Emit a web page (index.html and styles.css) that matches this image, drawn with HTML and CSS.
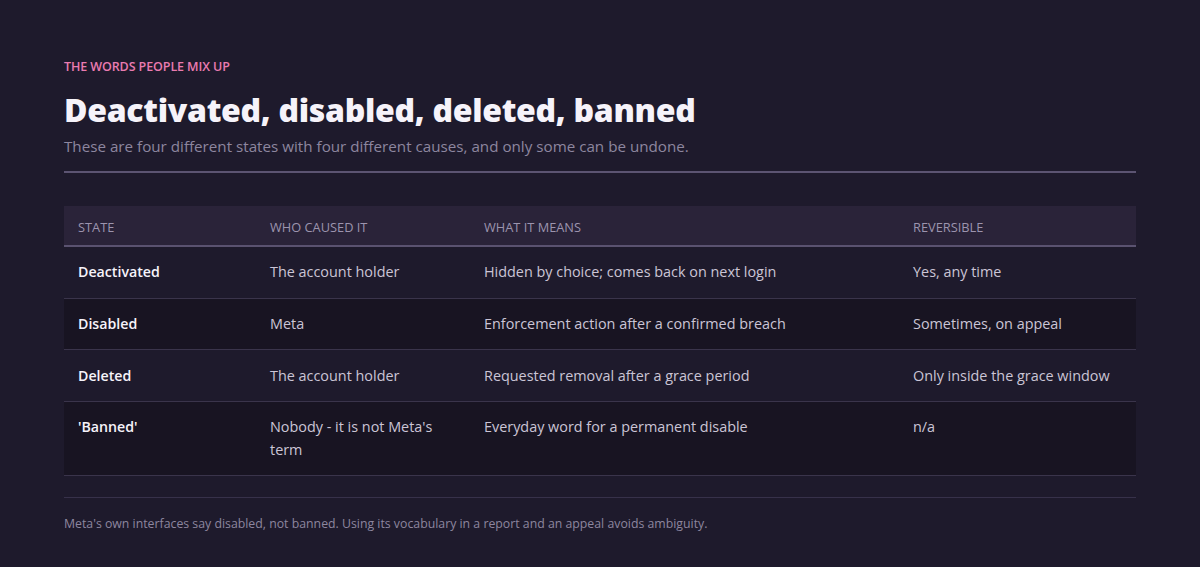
FILE: index.html
```html
<!DOCTYPE html>
<html lang="en">
<head>
<meta charset="utf-8">
<title>Deactivated, disabled, deleted, banned</title>
<link rel="stylesheet" href="styles.css">
</head>
<body>
<main class="page">
  <header class="intro">
    <p class="eyebrow">THE WORDS PEOPLE MIX UP</p>
    <h1 class="title">Deactivated, disabled, deleted, banned</h1>
    <p class="lede">These are four different states with four different causes, and only some can be undone.</p>
  </header>
  <table class="states">
    <colgroup>
      <col class="c1"><col class="c2"><col class="c3"><col class="c4">
    </colgroup>
    <thead>
      <tr><th>STATE</th><th>WHO CAUSED IT</th><th>WHAT IT MEANS</th><th>REVERSIBLE</th></tr>
    </thead>
    <tbody>
      <tr><td class="name">Deactivated</td><td>The account holder</td><td>Hidden by choice; comes back on next login</td><td>Yes, any time</td></tr>
      <tr class="alt"><td class="name">Disabled</td><td>Meta</td><td>Enforcement action after a confirmed breach</td><td>Sometimes, on appeal</td></tr>
      <tr><td class="name">Deleted</td><td>The account holder</td><td>Requested removal after a grace period</td><td>Only inside the grace window</td></tr>
      <tr class="alt"><td class="name">'Banned'</td><td>Nobody - it is not Meta's term</td><td>Everyday word for a permanent disable</td><td>n/a</td></tr>
    </tbody>
  </table>
  <footer class="note">
    <p>Meta's own interfaces say disabled, not banned. Using its vocabulary in a report and an appeal avoids ambiguity.</p>
  </footer>
</main>
</body>
</html>
```
FILE: styles.css
```css
* { box-sizing: border-box; }
html, body { margin: 0; padding: 0; }
body {
  background: #1e1a2c;
  color: #e8e4ef;
  font-family: "Open Sans", "Noto Sans", sans-serif;
}
.page {
  width: 1072px;
  margin: 0 auto;
  padding-top: 59px;
}
.intro {
  border-bottom: 2px solid #5c5472;
  padding-bottom: 14px;
}
.eyebrow {
  margin: 0;
  font-size: 12.5px;
  line-height: 16px;
  color: #ea7bb0;
  font-weight: 600;
  letter-spacing: -0.1px;
}
.title {
  margin: 15px 0 0;
  font-size: 32px;
  line-height: 40px;
  font-weight: 800;
  color: #f6f3fa;
  letter-spacing: -0.3px;
}
.lede {
  margin: 5px 0 0;
  font-size: 15.2px;
  line-height: 22px;
  color: #8d869f;
}
.states {
  width: 100%;
  margin-top: 33px;
  border-collapse: collapse;
  table-layout: fixed;
  font-size: 14.4px;
}
.c1 { width: 192px; }
.c2 { width: 214px; }
.c3 { width: 429px; }
.c4 { width: 237px; }
.states th {
  background: #2a2339;
  color: #9c94ae;
  font-weight: 500;
  font-size: 12.8px;
  text-align: left;
  padding: 13px 14px 9px;
  line-height: 17px;
  border-bottom: 2px solid #5a5270;
}
.states td {
  padding: 14.2px 14px;
  line-height: 22.3px;
  color: #cbc5d6;
  vertical-align: top;
  border-bottom: 1px solid #3a344b;
}
.states td.name {
  color: #f6f3fa;
  font-weight: 600;
  font-size: 14.2px;
}
.states tr.alt td {
  background: #181422;
}
.note {
  margin-top: 21px;
  border-top: 1px solid #37314a;
  padding-top: 17px;
}
.note p {
  margin: 0;
  font-size: 12.3px;
  line-height: 18px;
  color: #8d869f;
}
```
